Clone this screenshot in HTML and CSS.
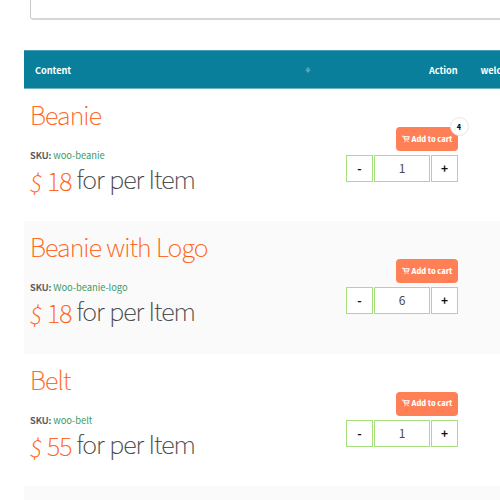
FILE: index.html
```
<!DOCTYPE html>
<html lang="en">
<head>
<meta charset="utf-8">
<title>Products</title>
<link rel="stylesheet" href="styles.css">
</head>
<body>
<svg class="defs" width="0" height="0">
  <symbol id="cart" viewBox="0 0 8 8">
    <path d="M0 1.2H1.6L2.7 4.9H6.2L7.3 1.7H1.8" fill="none" stroke="currentColor" stroke-width="1"/>
    <path d="M2.3 3.2H6.7" fill="none" stroke="currentColor" stroke-width=".7"/>
    <circle cx="3" cy="6.6" r=".7" fill="currentColor"/>
    <circle cx="6" cy="6.6" r=".7" fill="currentColor"/>
  </symbol>
</svg>
<div class="search"></div>
<div class="table">
  <div class="head">
    <span class="h-content">Content</span>
    <svg class="sort" width="6" height="6" viewBox="0 0 6 6"><path d="M3 0L5.6 2.8H.4ZM3 6L5.6 3.1H.4Z"/></svg>
    <span class="h-action">Action</span>
    <span class="h-next">welcome</span>
  </div>
  <div class="row">
    <div class="content">
      <h2 class="title">Beanie</h2>
      <p class="sku"><b>SKU:</b> <span>woo-beanie</span></p>
      <p class="price"><span class="amount"><span class="cur">$</span><span class="num">18</span></span><span class="unit">for per Item</span></p>
    </div>
    <div class="action">
      <button class="add"><svg class="cart"><use href="#cart"/></svg><span>Add to cart</span><span class="badge">4</span></button>
      <div class="qty"><span class="step">-</span><span class="val">1</span><span class="step">+</span></div>
    </div>
  </div>
  <div class="row">
    <div class="content">
      <h2 class="title">Beanie with Logo</h2>
      <p class="sku"><b>SKU:</b> <span>Woo-beanie-logo</span></p>
      <p class="price"><span class="amount"><span class="cur">$</span><span class="num">18</span></span><span class="unit">for per Item</span></p>
    </div>
    <div class="action">
      <button class="add"><svg class="cart"><use href="#cart"/></svg><span>Add to cart</span></button>
      <div class="qty"><span class="step">-</span><span class="val">6</span><span class="step">+</span></div>
    </div>
  </div>
  <div class="row">
    <div class="content">
      <h2 class="title">Belt</h2>
      <p class="sku"><b>SKU:</b> <span>woo-belt</span></p>
      <p class="price"><span class="amount"><span class="cur">$</span><span class="num">55</span></span><span class="unit">for per Item</span></p>
    </div>
    <div class="action">
      <button class="add"><svg class="cart"><use href="#cart"/></svg><span>Add to cart</span></button>
      <div class="qty"><span class="step">-</span><span class="val">1</span><span class="step">+</span></div>
    </div>
  </div>
  <div class="row last"></div>
</div>
</body>
</html>
```

FILE: styles.css
```
* { box-sizing: border-box; }
body {
  margin: 0;
  width: 500px;
  height: 500px;
  overflow: hidden;
  background: #fff;
  font-family: "Noto Sans CJK SC", "Open Sans", sans-serif;
  color: #3c3c3c;
}
.defs { display: block; }
.search {
  height: 20px;
  margin-left: 30px;
  border: solid #c9c9c9;
  border-width: 0 0 2px 1px;
  border-bottom-color: #d6d6d6;
  border-bottom-left-radius: 4px;
}
.table { margin: 30px 0 0 24px; width: 476px; }
.head {
  height: 39px;
  display: flex;
  align-items: center;
  background: #0a7f9c;
  border-top: 1px solid #4a9fb4;
  border-bottom: 1px solid #6db3c4;
  color: #fff;
  font-size: 9.2px;
  font-weight: 700;
  letter-spacing: -0.05px;
  overflow: hidden;
  white-space: nowrap;
}
.h-content { margin-left: 11px; width: 270px; flex: none; }
.sort { fill: #55a7bb; flex: none; }
.h-action { width: 169.5px; padding-left: 118px; flex: none; }
.h-next { flex: none; }
.row {
  height: 132.4px;
  display: flex;
  background: #fff;
}
.row:nth-child(odd) { background: #fafafa; }
.row.last { height: 13.8px; }
.content { width: 322px; padding-left: 6px; white-space: nowrap; }
.title {
  margin: 6px 0 0;
  height: 38px;
  line-height: 38px;
  font-size: 25.2px;
  font-weight: 100;
  letter-spacing: -0.87px;
  word-spacing: .6px;
  color: #ff5a0a;
  -webkit-text-stroke: .2px;
}
.sku {
  margin: 14px 0 0;
  height: 16px;
  line-height: 16px;
  font-size: 9.4px;
  letter-spacing: -0.05px;
  color: #555;
}
.sku b { font-weight: 500; -webkit-text-stroke: .2px; }
.sku span { color: #3c9a68; }
.price {
  margin: -3px 0 0;
  height: 36px;
  line-height: 36px;
  display: flex;
  font-size: 25.2px;
  font-weight: 100;
  letter-spacing: -0.98px;
  word-spacing: 1px;
  -webkit-text-stroke: .2px;
}
.amount { width: 46.5px; color: #ff5a0a; display: flex; }
.cur { width: 17px; padding-top: 4px; font-size: 23.5px; transform: translateX(1px) skewX(-10deg); }
.num { padding-top: 2px; letter-spacing: -0.8px; }
.action { width: 112px; padding-top: 38px; display: flex; flex-direction: column; align-items: flex-end; }
.add {
  position: relative;
  width: 62px;
  height: 24px;
  padding: 0 0 2px 5.5px;
  border: 0;
  border-radius: 4px;
  background: #ff7f57;
  color: #fff;
  font: 900 7.4px "Noto Sans CJK SC", sans-serif;
  display: flex;
  align-items: center;
  gap: 2px;
  white-space: nowrap;
}
.cart { width: 8px; height: 8px; flex: none; margin-top: 1px; }
.badge {
  position: absolute;
  left: 53.5px;
  top: -10px;
  width: 19px;
  height: 19px;
  border-radius: 50%;
  border: 1px solid #e8e8e8;
  background: #fff;
  color: #111;
  font-size: 7px;
  line-height: 18px;
  text-align: center;
}
.qty { margin-top: 4px; display: flex; gap: 1px; }
.step, .val {
  height: 27px;
  line-height: 24px;
  text-align: center;
  background: #fff;
  border: 1px solid #a6e07e;
}
.step { width: 27px; color: #111; font-size: 12px; font-weight: 700; }
.val { width: 56px; color: #4a4a4a; font-size: 12px; }
```
